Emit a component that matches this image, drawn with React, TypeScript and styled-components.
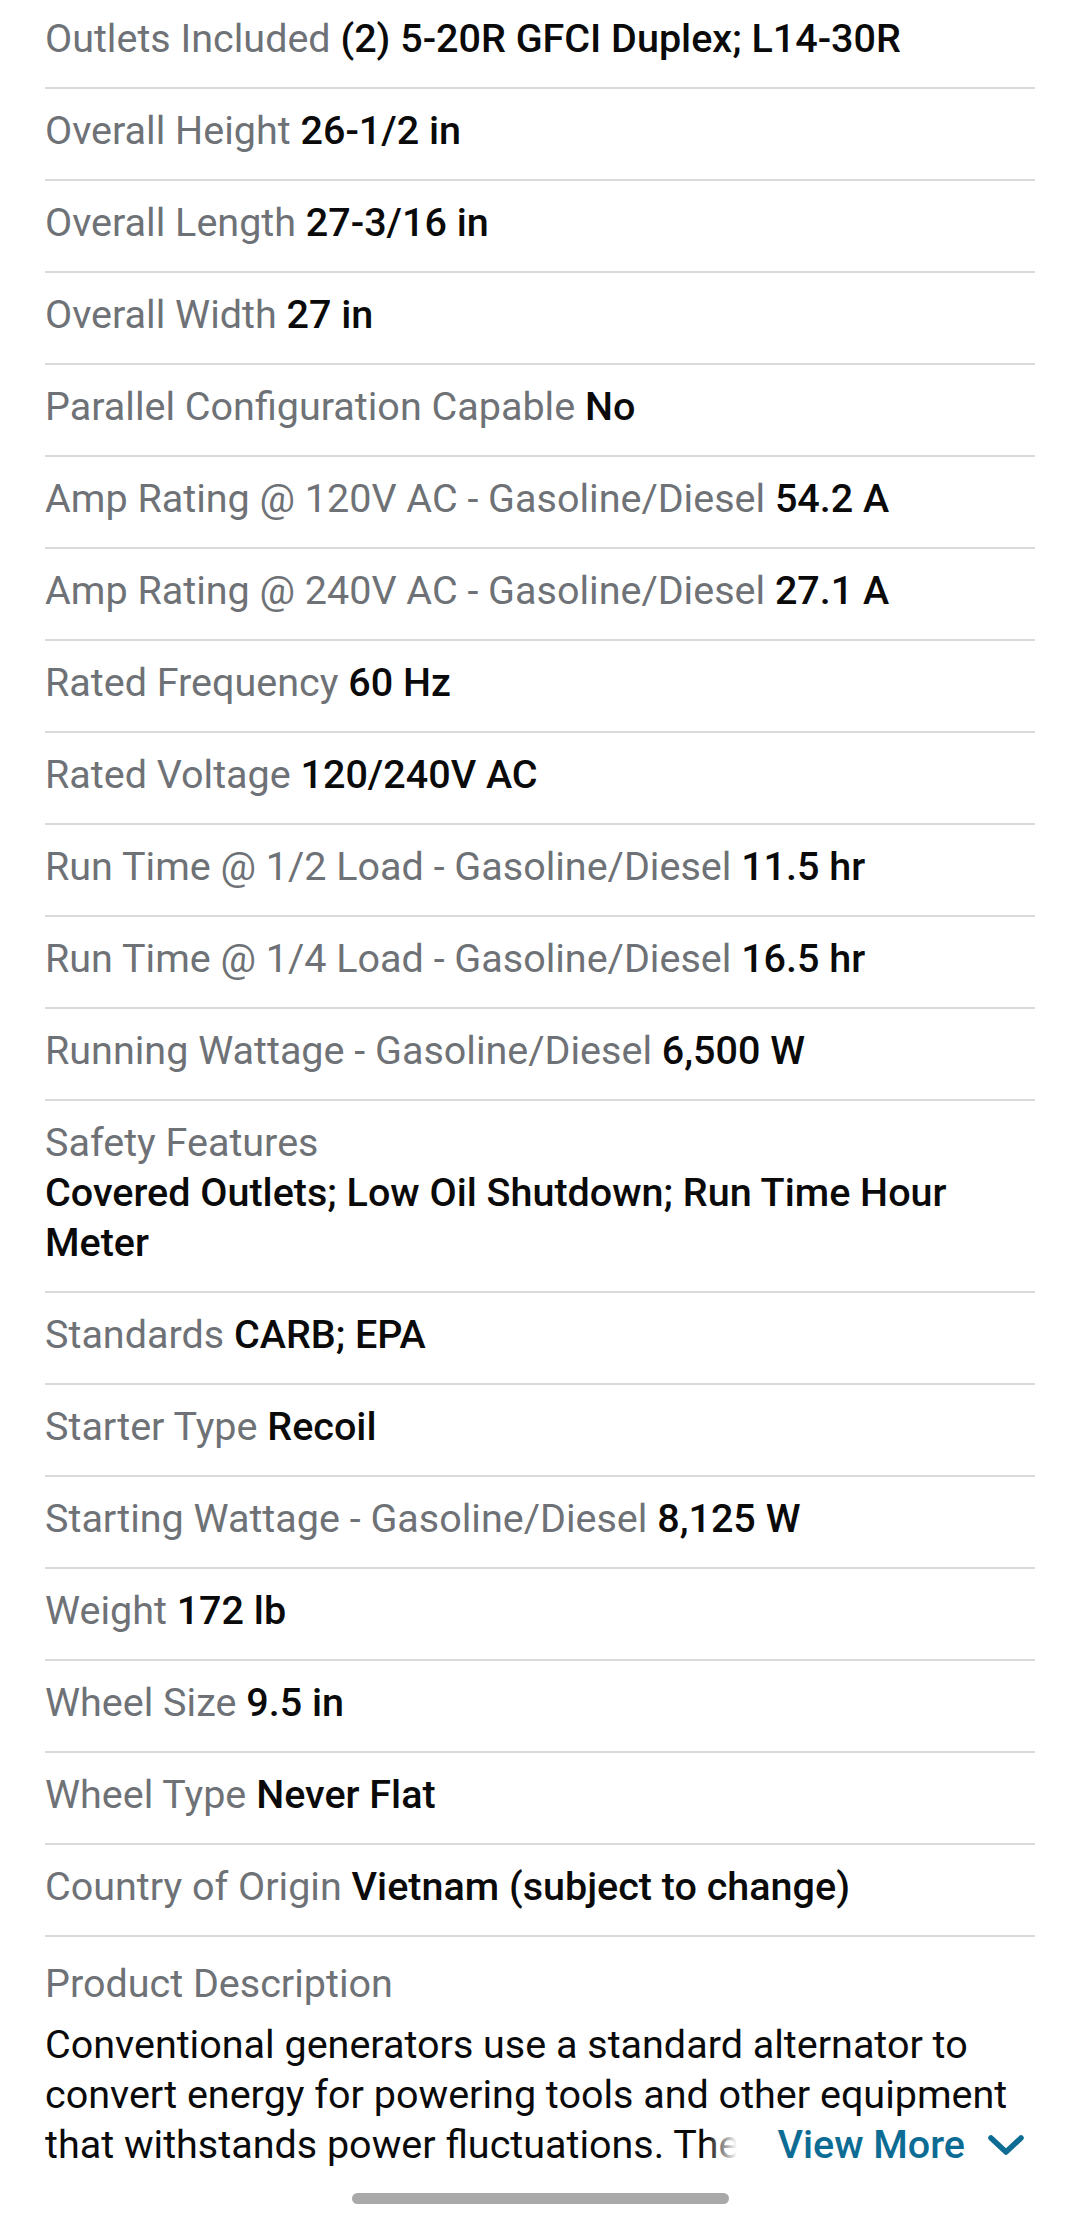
import React from "react";
import styled, { createGlobalStyle } from "styled-components";

const GlobalStyle = createGlobalStyle`
  html, body {
    margin: 0;
    padding: 0;
    background: #ffffff;
  }
  body {
    font-family: Roboto, "Noto Sans", "Liberation Sans", sans-serif;
    -webkit-font-smoothing: antialiased;
  }
`;

const Page = styled.div`
  width: 1080px;
  height: 2220px;
  overflow: hidden;
  box-sizing: border-box;
  padding: 0 45px;
  display: flex;
  flex-direction: column;
`;

const SpecList = styled.div`
  display: flex;
  flex-direction: column;
  margin-top: -3px;
`;

const Row = styled.div<{ $stacked?: boolean }>`
  padding: 17px 0 23px;
  border-bottom: 2px solid #dadada;
  font-size: 39.5px;
  line-height: 50px;
  display: ${(p) => (p.$stacked ? "flex" : "block")};
  flex-direction: column;
`;

const Label = styled.span`
  color: #6e7276;
  font-weight: 400;
`;

const Value = styled.span`
  color: #0a0a0a;
  font-weight: 500;
`;

const DescSection = styled.div`
  padding: 21.5px 0 0;
  font-size: 39.5px;
  line-height: 50px;
  display: flex;
  flex-direction: column;
`;

const DescBody = styled.div`
  position: relative;
  margin-top: 11px;
  height: 150px;
  overflow: hidden;
`;

const DescText = styled.p`
  margin: 0;
  color: #0a0a0a;
  font-weight: 400;
`;

const ViewMore = styled.button`
  position: absolute;
  right: 0;
  bottom: 0;
  height: 50px;
  padding: 0 10px 0 70px;
  border: none;
  background: linear-gradient(
    to right,
    rgba(255, 255, 255, 0) 0px,
    #ffffff 30px,
    #ffffff 100%
  );
  display: flex;
  align-items: center;
  gap: 22px;
  font-family: Roboto, "Noto Sans", sans-serif;
  font-size: 39.5px;
  font-weight: 500;
  color: #0d6c93;
  cursor: pointer;
`;

const HomeBarWrap = styled.div`
  margin-top: auto;
  padding-bottom: 16px;
  display: flex;
  justify-content: center;
`;

const HomeBar = styled.div`
  width: 377px;
  height: 11px;
  border-radius: 6px;
  background: #a9a9a9;
`;

const Chevron = () => (
  <svg width="38" height="24" viewBox="0 0 38 24" fill="none">
    <path
      d="M4 5 L19 19 L34 5"
      stroke="#0d6c93"
      strokeWidth="5.5"
      strokeLinecap="round"
      strokeLinejoin="round"
    />
  </svg>
);

const specs: [string, string][] = [
  ["Outlets Included", "(2) 5-20R GFCI Duplex; L14-30R"],
  ["Overall Height", "26-1/2 in"],
  ["Overall Length", "27-3/16 in"],
  ["Overall Width", "27 in"],
  ["Parallel Configuration Capable", "No"],
  ["Amp Rating @ 120V AC - Gasoline/Diesel", "54.2 A"],
  ["Amp Rating @ 240V AC - Gasoline/Diesel", "27.1 A"],
  ["Rated Frequency", "60 Hz"],
  ["Rated Voltage", "120/240V AC"],
  ["Run Time @ 1/2 Load - Gasoline/Diesel", "11.5 hr"],
  ["Run Time @ 1/4 Load - Gasoline/Diesel", "16.5 hr"],
  ["Running Wattage - Gasoline/Diesel", "6,500 W"],
];

const specs2: [string, string][] = [
  ["Standards", "CARB; EPA"],
  ["Starter Type", "Recoil"],
  ["Starting Wattage - Gasoline/Diesel", "8,125 W"],
  ["Weight", "172 lb"],
  ["Wheel Size", "9.5 in"],
  ["Wheel Type", "Never Flat"],
  ["Country of Origin", "Vietnam (subject to change)"],
];

export default function App() {
  return (
    <>
      <GlobalStyle />
      <Page>
        <SpecList>
          {specs.map(([l, v]) => (
            <Row key={l}>
              <Label>{l}</Label> <Value>{v}</Value>
            </Row>
          ))}
          <Row $stacked>
            <Label>Safety Features</Label>
            <Value>Covered Outlets; Low Oil Shutdown; Run Time Hour Meter</Value>
          </Row>
          {specs2.map(([l, v]) => (
            <Row key={l}>
              <Label>{l}</Label> <Value>{v}</Value>
            </Row>
          ))}
        </SpecList>
        <DescSection>
          <Label>Product Description</Label>
          <DescBody>
            <DescText>
              Conventional generators use a standard alternator to convert
              energy for powering tools and other equipment that withstands
              power fluctuations. These generators are ideal for jobsites,
              home backup power and outdoor use.
            </DescText>
            <ViewMore>
              View More
              <Chevron />
            </ViewMore>
          </DescBody>
        </DescSection>
        <HomeBarWrap>
          <HomeBar />
        </HomeBarWrap>
      </Page>
    </>
  );
}
